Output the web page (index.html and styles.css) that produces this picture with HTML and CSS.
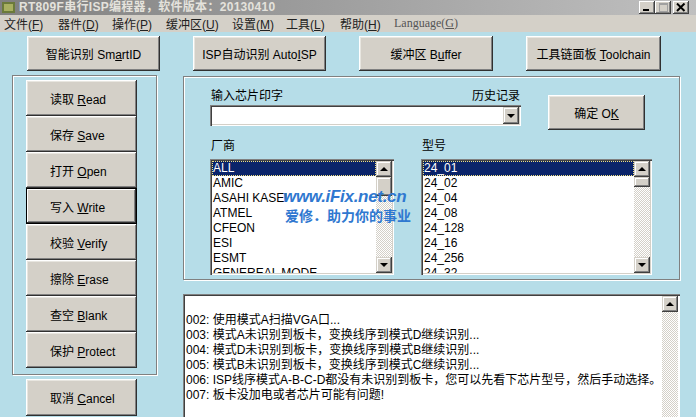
FILE: index.html
```html
<!DOCTYPE html>
<html lang="zh-CN">
<head>
<meta charset="utf-8">
<title>RT809F串行ISP编程器</title>
<link rel="stylesheet" href="styles.css">
</head>
<body>
<div class="window">
  <div class="titlebar">
    <svg class="app-icon" width="16" height="15" viewBox="0 0 16 15">
      <rect x="1" y="2" width="13" height="11" fill="#6b7a3a"/>
      <rect x="3" y="4" width="9" height="7" fill="#a8b060"/>
    </svg>
    <span class="title">RT809F串行ISP编程器，软件版本：20130410</span>
    <div class="caption-btns">
      <span class="cbtn"><i class="min"></i></span>
      <span class="cbtn"><i class="max"></i></span>
      <span class="cbtn close">
        <svg width="10" height="9" viewBox="0 0 10 9"><path d="M1 0.5 L8.5 8 M8.5 0.5 L1 8" stroke="#000" stroke-width="2"/></svg>
      </span>
    </div>
  </div>

  <div class="menubar">
    <span class="menu">文件(<u>F</u>)</span>
    <span class="menu">器件(<u>D</u>)</span>
    <span class="menu">操作(<u>P</u>)</span>
    <span class="menu wide">缓冲区(<u>U</u>)</span>
    <span class="menu">设置(<u>M</u>)</span>
    <span class="menu">工具(<u>L</u>)</span>
    <span class="menu">帮助(<u>H</u>)</span>
    <span class="menu lang">Language(<u>G</u>)</span>
  </div>

  <div class="client">
    <div class="toolbar">
      <button class="btn tb1">智能识别 Sm<u>a</u>rtID</button>
      <button class="btn tb2">ISP自动识别 Auto<u>I</u>SP</button>
      <button class="btn tb3">缓冲区 B<u>u</u>ffer</button>
      <button class="btn tb4">工具链面板 <u>T</u>oolchain</button>
    </div>

    <div class="workspace">
      <div class="left-col">
        <div class="group ops">
          <button class="btn op">读取 <u>R</u>ead</button>
          <button class="btn op">保存 <u>S</u>ave</button>
          <button class="btn op">打开 <u>O</u>pen</button>
          <button class="btn op focused">写入 <u>W</u>rite</button>
          <button class="btn op">校验 <u>V</u>erify</button>
          <button class="btn op">擦除 <u>E</u>rase</button>
          <button class="btn op">查空 <u>B</u>lank</button>
          <button class="btn op">保护 <u>P</u>rotect</button>
        </div>
        <button class="btn op cancel">取消 <u>C</u>ancel</button>
      </div>

      <div class="right-col">
        <div class="group chip">
          <div class="chip-top">
            <div class="mark-field">
              <div class="label-row">
                <span>输入芯片印字</span>
                <span>历史记录</span>
              </div>
              <div class="combo">
                <span class="combo-text"></span>
                <span class="sbtn"><i class="arrow down"></i></span>
              </div>
            </div>
            <button class="btn ok">确定 O<u>K</u></button>
          </div>

          <div class="chip-lists">
            <div class="list-field vendor">
              <div class="field-label">厂商</div>
              <div class="listbox">
                <ul class="items">
                  <li class="sel">ALL</li>
                  <li>AMIC</li>
                  <li>ASAHI KASEI</li>
                  <li>ATMEL</li>
                  <li>CFEON</li>
                  <li>ESI</li>
                  <li>ESMT</li>
                  <li>GENEREAL MODE</li>
                </ul>
                <div class="vscroll">
                  <span class="sbtn"><i class="arrow up"></i></span>
                  <span class="thumb big"></span>
                  <span class="track"></span>
                  <span class="sbtn"><i class="arrow down"></i></span>
                </div>
              </div>
            </div>
            <div class="list-field model">
              <div class="field-label">型号</div>
              <div class="listbox">
                <ul class="items">
                  <li class="sel">24_01</li>
                  <li>24_02</li>
                  <li>24_04</li>
                  <li>24_08</li>
                  <li>24_128</li>
                  <li>24_16</li>
                  <li>24_256</li>
                  <li>24_32</li>
                </ul>
                <div class="vscroll">
                  <span class="sbtn"><i class="arrow up"></i></span>
                  <span class="thumb"></span>
                  <span class="track"></span>
                  <span class="sbtn"><i class="arrow down"></i></span>
                </div>
              </div>
            </div>
          </div>

          <div class="watermark">
            <div class="wm-url">www.iFix.net.cn</div>
            <div class="wm-cn">爱修．助力你的事业</div>
          </div>
        </div>

        <div class="log">
          <div class="log-lines">
            <div class="line">&nbsp;</div>
            <div class="line">002: 使用模式A扫描VGA口...</div>
            <div class="line">003: 模式A未识别到板卡，变换线序到模式D继续识别...</div>
            <div class="line">004: 模式D未识别到板卡，变换线序到模式B继续识别...</div>
            <div class="line">005: 模式B未识别到板卡，变换线序到模式C继续识别...</div>
            <div class="line">006: ISP线序模式A-B-C-D都没有未识别到板卡，您可以先看下芯片型号，然后手动选择。</div>
            <div class="line">007: 板卡没加电或者芯片可能有问题!</div>
          </div>
          <div class="vscroll">
            <span class="sbtn"><i class="arrow up"></i></span>
            <span class="track"></span>
          </div>
        </div>
      </div>
    </div>
  </div>
</div>
</body>
</html>
```

FILE: styles.css
```css
html, body {
  margin: 0;
  padding: 0;
}
body {
  width: 696px;
  height: 417px;
  overflow: hidden;
  font-family: "Liberation Sans", "Noto Sans CJK SC", sans-serif;
  font-size: 12px;
  color: #000;
  background: #b6dde8;
}

.window {
  width: 696px;
  height: 417px;
  display: flex;
  flex-direction: column;
}

/* caption */
.titlebar {
  height: 15px;
  display: flex;
  align-items: center;
  background: linear-gradient(to right, #808080, #c0c0c0);
  position: relative;
}
.app-icon {
  flex: none;
  margin-left: 1px;
}
.title {
  margin-left: 2px;
  color: #e4e2dc;
  font-weight: bold;
  font-size: 12px;
  line-height: 15px;
  letter-spacing: 0.3px;
}
.caption-btns {
  margin-left: auto;
  margin-right: 7px;
  display: flex;
}
.cbtn {
  width: 16px;
  height: 13px;
  background: #d4d0c8;
  box-shadow: inset -1px -1px #404040, inset 1px 1px #fff, inset -2px -2px #808080;
  display: flex;
  align-items: center;
  justify-content: center;
  position: relative;
}
.cbtn.close {
  margin-left: 2px;
}
.cbtn .min {
  position: absolute;
  left: 4px;
  bottom: 3px;
  width: 6px;
  height: 2px;
  background: #000;
}
.cbtn .max {
  width: 7px;
  height: 6px;
  border: 1px solid #a0a0a0;
  border-top-width: 2px;
  margin-top: -1px;
}

/* menu */
.menubar {
  height: 18px;
  background: #d4d0c8;
  display: flex;
  align-items: center;
  padding-left: 4px;
  color: #222;
}
.menu {
  width: 54px;
  flex: none;
  white-space: nowrap;
}
.menu.wide {
  width: 66px;
}
.menu.lang {
  font-family: "Liberation Serif", serif;
  color: #555;
}

/* buttons */
.btn {
  font-family: "Liberation Sans", "Noto Sans CJK SC", sans-serif;
  font-size: 12px;
  color: #000;
  background: #d4d0c8;
  border: 0;
  padding: 0;
  margin: 0;
  box-shadow: inset -1px -1px #303030, inset 1px 1px #fff, inset -2px -2px #808080, inset 2px 2px #e8e6e0;
  white-space: nowrap;
}
.btn u {
  text-decoration: underline;
}
.btn.focused {
  box-shadow: inset 0 0 0 1px #000, inset -2px -2px #303030, inset 2px 2px #fff, inset -3px -3px #808080;
}

.client {
  flex: 1;
  background: #b6dde8;
}
.toolbar {
  display: flex;
  gap: 33px;
  padding: 4px 0 0 27px;
}
.toolbar .btn {
  height: 35px;
}
.tb1, .tb2 { width: 133px; }
.tb3 { width: 134px; }
.tb4 { width: 135px; }

.workspace {
  display: flex;
  margin-top: 4px;
}

.group {
  border: 1px solid #808080;
  box-shadow: inset 1px 1px #fff, 1px 1px #fff;
}

.left-col {
  margin-left: 12px;
  width: 145px;
}
.ops {
  height: 294px;
  padding: 4px 0 0 13px;
  display: flex;
  flex-direction: column;
}
.op {
  width: 111px;
  height: 36px;
  text-align: left;
  padding-left: 24px;
  flex: none;
}
.cancel {
  margin: 4px 0 0 14px;
  height: 37px;
}

.right-col {
  margin-left: 26px;
  width: 497px;
  padding-top: 1px;
}
.chip {
  height: 202px;
  padding-left: 26px;
  position: relative;
}
.chip-top {
  display: flex;
  align-items: flex-start;
  padding-top: 12px;
  height: 37px;
}
.mark-field {
  width: 311px;
}
.label-row {
  height: 16px;
  display: flex;
  justify-content: space-between;
  padding: 0 1px 0 1px;
  line-height: 14px;
}
.combo {
  height: 21px;
  background: #fff;
  box-shadow: inset 1px 1px #808080, inset 2px 2px #404040, inset -1px -1px #fff, inset -2px -2px #d4d0c8;
  display: flex;
  justify-content: flex-end;
  padding: 2px;
  box-sizing: border-box;
}
.sbtn {
  width: 16px;
  height: 16px;
  flex: none;
  background: #d4d0c8;
  box-shadow: inset -1px -1px #404040, inset 1px 1px #d4d0c8, inset -2px -2px #808080, inset 2px 2px #fff;
  display: flex;
  align-items: center;
  justify-content: center;
}
.combo .sbtn {
  height: 17px;
}
.arrow {
  width: 0;
  height: 0;
  border-left: 4px solid transparent;
  border-right: 4px solid transparent;
}
.arrow.down {
  border-top: 4px solid #000;
}
.arrow.up {
  border-bottom: 4px solid #000;
}
.ok {
  margin: 6px 0 0 27px;
  width: 97px;
  height: 35px;
}

.chip-lists {
  display: flex;
  margin-top: 13px;
}
.field-label {
  height: 20px;
  line-height: 14px;
  padding-left: 1px;
}
.vendor { width: 184px; }
.model { width: 231px; margin-left: 27px; }

.listbox {
  height: 116px;
  background: #fff;
  box-shadow: inset 1px 1px #808080, inset 2px 2px #404040, inset -1px -1px #fff, inset -2px -2px #d4d0c8;
  padding: 2px;
  box-sizing: border-box;
  display: flex;
  overflow: hidden;
}
.items {
  list-style: none;
  margin: 0;
  padding: 0;
  flex: 1;
  overflow: hidden;
}
.items li {
  height: 15px;
  line-height: 15px;
  padding-left: 1px;
  white-space: nowrap;
}
.items li.sel {
  background: #0a246a;
  color: #fff;
  outline: 1px dotted #f0e080;
  outline-offset: -1px;
}

.vscroll {
  width: 16px;
  flex: none;
  display: flex;
  flex-direction: column;
}
.track {
  flex: 1;
  background: repeating-conic-gradient(#fff 0 25%, #d4d0c8 0 50%) 0 0 / 2px 2px;
}
.thumb {
  height: 10px;
  flex: none;
  background: #d4d0c8;
  box-shadow: inset -1px -1px #404040, inset 1px 1px #d4d0c8, inset -2px -2px #808080, inset 2px 2px #fff;
}
.thumb.big {
  height: 19px;
}

.watermark {
  position: absolute;
  left: 99px;
  top: 111px;
  color: #2f78d0;
  font-weight: bold;
  text-align: left;
  pointer-events: none;
}
.wm-url {
  font-family: "Liberation Sans", sans-serif;
  font-style: italic;
  font-size: 17px;
  line-height: 18px;
  letter-spacing: -0.3px;
}
.wm-cn {
  font-family: "Noto Sans CJK SC", sans-serif;
  font-size: 14px;
  line-height: 16px;
  margin-top: 1px;
  margin-left: 2px;
}

.log {
  margin-top: 14px;
  height: 123px;
  background: #fff;
  box-shadow: inset 1px 1px #808080, inset 2px 2px #404040;
  padding: 4px 2px 0 2px;
  box-sizing: border-box;
  display: flex;
}
.log-lines {
  flex: 1;
  padding-left: 1px;
}
.log .vscroll {
  margin-top: -2px;
}
.line {
  height: 15px;
  line-height: 15px;
  white-space: nowrap;
}
```
